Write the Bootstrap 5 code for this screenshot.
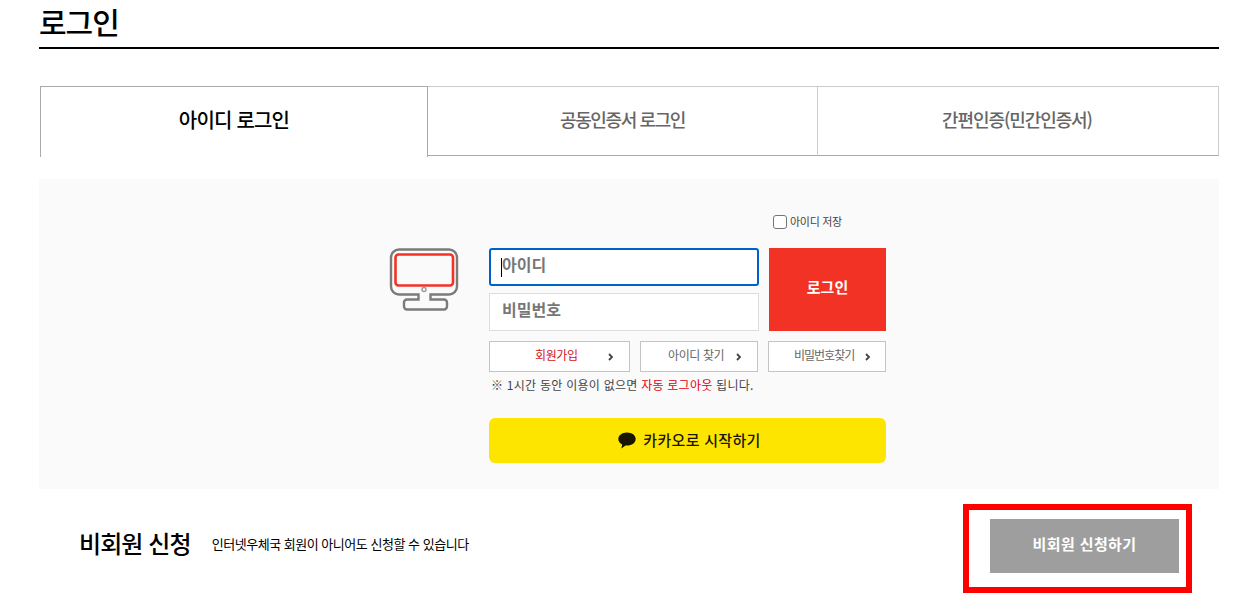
<!DOCTYPE html>
<html lang="ko">
<head>
<meta charset="utf-8">
<title>로그인</title>
<link href="https://cdn.jsdelivr.net/npm/bootstrap@5.3.0/dist/css/bootstrap.min.css" rel="stylesheet">
<style>
html,body{height:593px;overflow:hidden;background:#fff}
body{font-family:"Noto Sans CJK KR","Liberation Sans",sans-serif;color:#000}
.page-wrap{width:1180px;margin-left:39px}
.page-title{font-size:30px;font-weight:500;line-height:42px;height:49px;margin:0;border-bottom:2px solid #000;letter-spacing:-1px}
.tabs-row{margin:37px 0 0 1px;height:71px;display:flex;list-style:none;padding:0}
.tab-item{height:70px;display:flex;align-items:center;justify-content:center;font-size:18px;font-weight:500;color:#666;border:1px solid #ccc;border-left:0;border-bottom-color:#aaa;letter-spacing:-1px;padding-bottom:4px}
.tab-on{width:388px;height:71px;color:#000;background:#fff;border:1px solid #aaa;border-bottom:0;font-size:20px;letter-spacing:-.8px}
.tab-two{width:390px;letter-spacing:-1.4px}
.tab-three{width:401px;letter-spacing:-1.1px;padding-right:2px}
.panel-area{margin-top:22px;height:310px;background:#fafafa;padding:35px 0 0 350px;display:flex}
.pc-icon{width:70px;margin:34px 30px 0 0;flex:none}
.form-box{width:397px}
.save-row{height:34px;padding-left:284px;font-size:11px;color:#444;line-height:14px;letter-spacing:-.3px}
.save-check{width:14px;height:14px;border:1px solid #767676;border-radius:3px;background:#fff;appearance:none;margin:0 3px 0 0;vertical-align:-3px}
.login-grid{display:flex;gap:10px}
.field-col{width:270px;display:flex;flex-direction:column;gap:7px}
.input-holder{position:relative}
.input-caret{position:absolute;left:12px;top:10px;width:1px;height:19px;background:#000}
.login-input{height:38px;border:1px solid #ddd;border-radius:0;padding:0 12px 6px;font-size:16px;font-weight:700;background:#fff;box-shadow:none}
.login-input::placeholder{color:#777;opacity:1}
.login-focused,.login-input:focus{outline:0;border:2px solid #0062c8;border-radius:3px;padding:0 11px 6px;box-shadow:none}
.login-btn{width:117px;height:83px;background:#f33226;color:#fff;border:0;border-radius:0;font-size:15px;font-weight:700;padding:0 0 4px}
.login-btn:hover{background:#f33226;color:#fff}
.find-row{display:flex;gap:10px;margin-top:10px}
.find-link{height:31px;border:1px solid #c4c4c4;background:#fff;color:#666;font-size:12px;display:flex;align-items:center;text-decoration:none;letter-spacing:-.4px;position:relative;padding-bottom:4px}
.find-a{width:141px;color:#d3131c;padding-left:45px}
.find-b{width:118px;padding-left:27px}
.find-c{width:118px;padding-left:25px;letter-spacing:-1px}
.find-link svg{position:absolute;right:15px;top:11px}
.find-c svg{right:14px}
.notice-line{font-size:12px;color:#444;margin:4px 0 0;line-height:18px;padding-left:2px;letter-spacing:.25px}
.notice-line b{font-weight:400;color:#e0000f}
.kakao-btn{height:45px;margin-top:24px;background:#fee500;color:#191600;border-radius:6px;display:flex;align-items:center;justify-content:center;gap:7px;font-size:15px;font-weight:500;text-decoration:none;letter-spacing:.3px;padding-left:4px}
.guest-row{height:104px;display:flex;align-items:center;padding:9px 40px 0 40px}
.guest-title{font-size:24px;font-weight:500;margin:0;letter-spacing:-.9px;line-height:32px;padding-bottom:6px}
.guest-desc{font-size:13px;margin:0 0 0 21px;letter-spacing:-.48px;padding-bottom:3px}
.guest-btn-wrap{margin-left:auto;position:relative}
.guest-btn{width:189px;height:54px;background:#9e9e9e;color:#fff;border:0;border-radius:0;font-size:15px;font-weight:700;padding:0 0 2px;letter-spacing:.4px}
.guest-btn:hover{background:#9e9e9e;color:#fff}
.guest-mark{position:absolute;left:-27px;top:-15px;width:229px;height:89px;border:6px solid #f00;pointer-events:none}
</style>
</head>
<body>
<div class="page-wrap">
  <h1 class="page-title">로그인</h1>
  <ul class="tabs-row">
    <li class="tab-item tab-on">아이디 로그인</li>
    <li class="tab-item tab-two">공동인증서 로그인</li>
    <li class="tab-item tab-three">간편인증(민간인증서)</li>
  </ul>
  <div class="panel-area">
    <svg class="pc-icon" height="64" viewBox="0 0 70 64" fill="none">
      <path d="M10 1.500h50a8 8 0 0 1 8 8v29a8 8 0 0 1-8 8H41.500v5H55a3 3 0 0 1 3 3v4a3 3 0 0 1-3 3H18a3 3 0 0 1-3-3v-4a3 3 0 0 1 3-3h11.500v-5H10a8 8 0 0 1-8-8v-29a8 8 0 0 1 8-8z" stroke="#7b7b7b" stroke-width="2.400"/>
      <rect x="6.500" y="6.500" width="57.500" height="31" rx="3" stroke="#f33226" stroke-width="2.600"/>
      <circle cx="35" cy="41.500" r="2" stroke="#9a9a9a" stroke-width="1.400"/>
    </svg>
    <div class="form-box">
      <div class="save-row"><input class="save-check" type="checkbox" id="saveId"><label for="saveId">아이디 저장</label></div>
      <div class="login-grid">
        <div class="field-col">
          <div class="input-holder">
            <input class="form-control login-input login-focused" type="text" placeholder="아이디">
            <span class="input-caret"></span>
          </div>
          <input class="form-control login-input" type="password" placeholder="비밀번호">
        </div>
        <button class="btn login-btn" type="button">로그인</button>
      </div>
      <div class="find-row">
        <a class="find-link find-a" href="#">회원가입<svg width="6" height="8" viewBox="0 0 6 8"><path d="M1 1l3 3-3 3" fill="none" stroke="#444" stroke-width="1.800"/></svg></a>
        <a class="find-link find-b" href="#">아이디 찾기<svg width="6" height="8" viewBox="0 0 6 8"><path d="M1 1l3 3-3 3" fill="none" stroke="#444" stroke-width="1.800"/></svg></a>
        <a class="find-link find-c" href="#">비밀번호찾기<svg width="6" height="8" viewBox="0 0 6 8"><path d="M1 1l3 3-3 3" fill="none" stroke="#444" stroke-width="1.800"/></svg></a>
      </div>
      <p class="notice-line">※ 1시간 동안 이용이 없으면 <b>자동 로그아웃</b> 됩니다.</p>
      <a class="kakao-btn" href="#"><svg width="18" height="17" viewBox="0 0 18 17"><path d="M9 .5C4.100.5.300 3.400.300 7c0 2.300 1.600 4.300 3.900 5.500L3.400 16.500l4.200-3c.5.100.9.100 1.400.100 4.900 0 8.700-2.900 8.700-6.600S13.900.5 9 .5z" fill="#191600"/></svg>카카오로 시작하기</a>
    </div>
  </div>
  <div class="guest-row">
    <h2 class="guest-title">비회원 신청</h2>
    <p class="guest-desc">인터넷우체국 회원이 아니어도 신청할 수 있습니다</p>
    <div class="guest-btn-wrap">
      <button class="btn guest-btn" type="button">비회원 신청하기</button>
      <span class="guest-mark"></span>
    </div>
  </div>
</div>
<script src="https://cdn.jsdelivr.net/npm/bootstrap@5.3.0/dist/js/bootstrap.bundle.min.js"></script>
</body>
</html>
